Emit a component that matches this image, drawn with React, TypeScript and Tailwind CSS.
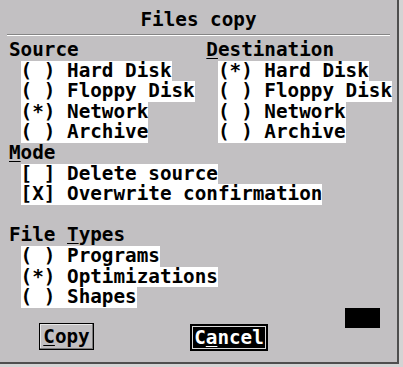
import React from "react";

const Row = ({ children }: { children: React.ReactNode }) => (
  <div className="pl-[1ch] h-[20.6px]">
    <span className="bg-white whitespace-pre inline-block h-[20.6px]">{children}</span>
  </div>
);

export default function App() {
  return (
    <div className="w-[403px] h-[367px] bg-[#d4d4d4]">
      <div className="w-[399px] h-[364px] bg-[#c2c0c2] border-r-2 border-b-2 border-[#4e4e4e] font-['DejaVu_Sans_Mono',monospace] font-bold text-[19.3px] leading-[20.6px] text-black flex flex-col">
        <div className="pt-[10px] h-[30.6px] text-center whitespace-pre">Files copy</div>
        <div className="mx-[7px] mt-[3px] border-t border-b border-t-[#858585] border-b-white" />
        <div className="mt-[4.4px] pl-[9px] flex">
          <div className="w-[17ch] shrink-0">
            <div className="h-[20.6px]">Source</div>
            <Row>( ) Hard Disk</Row>
            <Row>( ) Floppy Disk</Row>
            <Row>(*) Network</Row>
            <Row>( ) Archive</Row>
          </div>
          <div>
            <div className="h-[20.6px]">
              <span className="underline decoration-1 underline-offset-2">D</span>estination
            </div>
            <Row>(*) Hard Disk</Row>
            <Row>( ) Floppy Disk</Row>
            <Row>( ) Network</Row>
            <Row>( ) Archive</Row>
          </div>
        </div>
        <div className="pl-[9px]">
          <div className="h-[20.6px]">
            <span className="underline decoration-1 underline-offset-2">M</span>ode
          </div>
          <Row>[ ] Delete source</Row>
          <Row>[X] Overwrite confirmation</Row>
          <div className="h-[20.6px]" />
          <div className="h-[20.6px] whitespace-pre">
            File <span className="underline decoration-1 underline-offset-2">T</span>ypes
          </div>
          <Row>( ) Programs</Row>
          <Row>(*) Optimizations</Row>
          <Row>( ) Shapes</Row>
        </div>
        <div className="flex items-start pl-[39px]">
          <div className="mt-[15px] w-[55px] h-[27px] border border-black shadow-[inset_-1px_-1px_0_#7a7a7a,inset_1px_1px_0_#e8e8e8] flex items-center justify-center leading-none">
            <span>
              <span className="underline decoration-1 underline-offset-2">C</span>opy
            </span>
          </div>
          <div className="mt-[16px] ml-[96px] w-[78px] h-[27px] bg-black p-[2px]">
            <div className="w-full h-full border border-[#d8d8d8] text-white flex items-center justify-center leading-none">
              <span>
                C<span className="underline decoration-1 underline-offset-2">a</span>ncel
              </span>
            </div>
          </div>
          <div className="ml-[77px] w-[35px] h-[20px] bg-black" />
        </div>
      </div>
    </div>
  );
}
